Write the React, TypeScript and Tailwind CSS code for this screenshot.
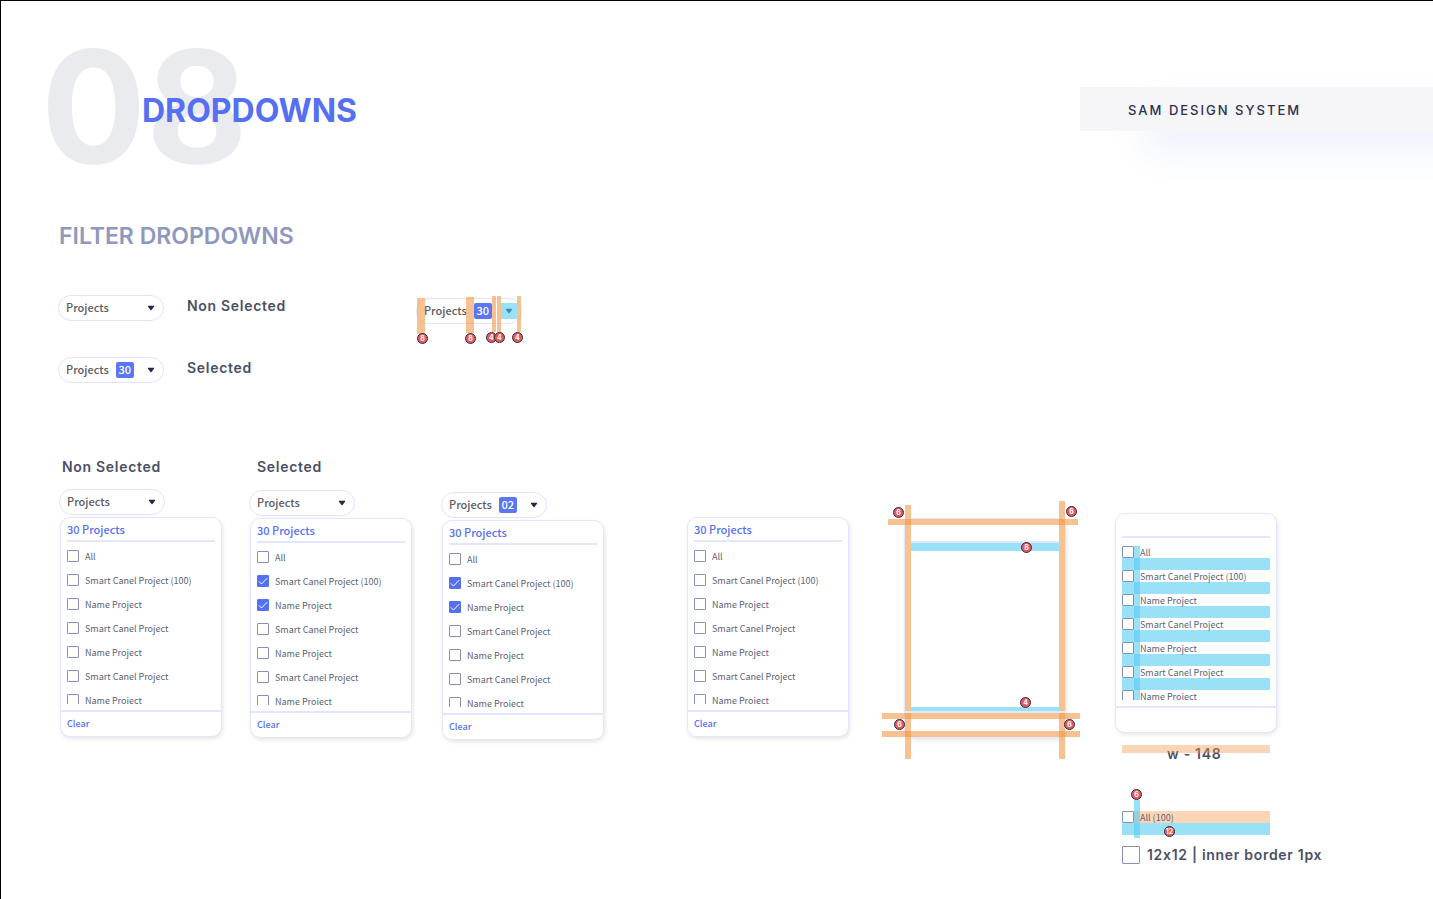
import type { ReactNode } from 'react';

const heading = "font-[Inter,'Open_Sans',sans-serif]";
const body = "font-['Noto_Sans_CJK_SC','Noto_Sans',sans-serif]";

const PROJECTS = [
  'All',
  'Smart Canel Project (100)',
  'Name Project',
  'Smart Canel Project',
  'Name Project',
  'Smart Canel Project',
  'Name Project',
];

function Caret() {
  return (
    <span className="ml-auto flex size-4 items-center justify-center">
      <svg width="8" height="6" viewBox="0 0 8 6" aria-hidden="true">
        <path
          d="M1.4 .8h5.2c.5 0 .7.5.4.9L4.5 4.9c-.3.4-.7.4-1 0L1 1.7C.7 1.300.9.8 1.4.8Z"
          fill="#232946"
        />
      </svg>
    </span>
  );
}

function FilterButton({ count }: { count?: string }) {
  return (
    <button
      type="button"
      aria-haspopup="listbox"
      className={`${body} flex h-[26px] w-[106px] items-center gap-[7px] rounded-full border border-[#dfe3fd] bg-white pr-1 pl-[7px] text-[11px] leading-4 font-medium text-[#5b5b5f]`}
    >
      <span className="pb-0.5">Projects</span>
      {count && (
        <span className="flex h-4 w-[18px] shrink-0 items-center justify-center rounded-[2px] bg-[#5b76f7] pb-0.5 text-white">
          {count}
        </span>
      )}
      <Caret />
    </button>
  );
}

function Checkbox({ id, checked = false }: { id: string; checked?: boolean }) {
  return (
    <span className="grid size-3 shrink-0">
      <input
        id={id}
        type="checkbox"
        defaultChecked={checked}
        className="peer col-start-1 row-start-1 size-3 appearance-none rounded-[1px] border border-[#8590bd] bg-white checked:border-[#5570f1] checked:bg-[#5570f1]"
      />
      <svg
        viewBox="0 0 12 12"
        aria-hidden="true"
        className="pointer-events-none col-start-1 row-start-1 size-3 opacity-0 peer-checked:opacity-100"
      >
        <path d="M1.800 6.300 4.500 9 10.300 3" fill="none" stroke="#fff" strokeWidth="1" />
      </svg>
    </span>
  );
}

type PanelProps = {
  id: string;
  title?: string;
  selected?: number[];
  items?: string[];
  action?: string;
  children?: ReactNode;
};

function Panel({ id, title, selected = [], items = PROJECTS, action, children }: PanelProps) {
  return (
    <div
      className={`${body} relative w-[162px] rounded-[10px] border border-[#e2e7ff] bg-white shadow-[1px_2px_4px_rgba(0,0,0,0.1)]`}
    >
      <div className="px-1.5">
        <div className="h-6 border-b-2 border-[#e2e7ff] pt-[3px] text-[11px] leading-4 font-medium text-[#5570f1]">
          {title}
        </div>
        <ul className="flex h-[162px] flex-col gap-3 overflow-hidden pt-2">
          {items.map((name, i) => (
            <li key={i} className="flex h-3 shrink-0 items-center gap-1.5">
              <Checkbox id={`${id}-${i}`} checked={selected.includes(i)} />
              <label htmlFor={`${id}-${i}`} className="pt-0.5 text-[9px] leading-3 text-[#5c5f76]">
                {name}
              </label>
            </li>
          ))}
        </ul>
      </div>
      <div className="mt-1.5 h-[26px] border-t-2 border-[#e2e7ff] px-1.5 pt-1.5">
        {action && (
          <button type="button" className="block text-[9px] leading-3 font-medium text-[#5570f1]">
            {action}
          </button>
        )}
      </div>
      {children}
    </div>
  );
}

function Guide({ className }: { className: string }) {
  return <span aria-hidden="true" className={`pointer-events-none absolute ${className}`} />;
}

function Marker({ className, children }: { className: string; children: ReactNode }) {
  return (
    <span
      className={`${heading} pointer-events-none absolute flex size-[11px] items-center justify-center rounded-full border border-[#2b3050] bg-[#eb5757] text-[7px] leading-none font-bold text-white ${className}`}
    >
      {children}
    </span>
  );
}

function Label({ children }: { children: ReactNode }) {
  return (
    <h3 className={`${heading} text-[14px] leading-5 font-semibold tracking-wider text-[#4b4f66]`}>
      {children}
    </h3>
  );
}

export default function App() {
  return (
    <main className="min-h-screen overflow-hidden border-t border-l border-black bg-white pb-8">
      <header className="flex items-start justify-between">
        <div className={`${heading} grid pt-[46px] pl-[40px]`}>
          <span className="col-start-1 row-start-1 text-[156px] leading-[120px] font-bold text-[#eaebef]">
            08
          </span>
          <h1 className="z-10 col-start-1 row-start-1 mt-[44px] ml-[101px] text-[32px] leading-10 font-bold text-[#5570f1]">
            DROPDOWNS
          </h1>
        </div>
        <p
          className={`${heading} mt-[86px] w-[353px] bg-[#f6f6f9] pt-[13px] pb-[11px] pl-12 text-[13px] leading-5 font-medium tracking-[2px] text-[#2b3050] shadow-[64px_20px_36px_rgba(72,112,245,0.09)]`}
        >
          SAM DESIGN SYSTEM
        </p>
      </header>

      <section className="pt-[53px] pl-[57px]">
        <h2 className={`${heading} pl-px text-[23px] leading-8 font-semibold text-[#8e97bd]`}>
          FILTER DROPDOWNS
        </h2>

        <div className="mt-[43px] flex items-start gap-[130px]">
          <div className="flex flex-col gap-9">
            <div className="flex h-[26px] items-start gap-[23px]">
              <FilterButton />
              <div className="pt-px">
                <Label>Non Selected</Label>
              </div>
            </div>
            <div className="flex h-[26px] items-start gap-[23px]">
              <FilterButton count="30" />
              <div className="pt-px">
                <Label>Selected</Label>
              </div>
            </div>
          </div>

          <div className="relative mt-[3px]">
            <FilterButton count="30" />
            <Guide className="top-0 left-px h-9 w-2 bg-[#f2994a]/60" />
            <Guide className="-top-px left-[50px] h-9 w-2 bg-[#f2994a]/60" />
            <Guide className="-top-0.5 left-[76px] h-9 w-1 bg-[#f2994a]/60" />
            <Guide className="-top-0.5 left-[81px] h-9 w-1 bg-[#f2994a]/60" />
            <Guide className="top-[5px] left-[85px] size-4 bg-[#56ccf2]/60" />
            <Guide className="-top-0.5 left-[101px] h-9 w-1 bg-[#f2994a]/60" />
            <Marker className="top-[35px] left-px">8</Marker>
            <Marker className="top-[35px] left-[49px]">8</Marker>
            <Marker className="top-[34px] left-[70px]">4</Marker>
            <Marker className="top-[34px] left-[78px]">4</Marker>
            <Marker className="top-[34px] left-[96px]">4</Marker>
          </div>
        </div>
      </section>

      <section className="grid grid-cols-[190px_192px_245px_217px_211px_1fr] items-start pt-[74px] pl-[59px]">
        <div>
          <div className="pb-3 pl-0.5">
            <Label>Non Selected</Label>
          </div>
          <div className="-ml-px pb-0.5">
            <FilterButton />
          </div>
          <Panel id="plain" title="30 Projects" action="Clear" />
        </div>

        <div>
          <div className="pb-[13px] pl-[7px]">
            <Label>Selected</Label>
          </div>
          <div className="-ml-px pb-0.5">
            <FilterButton />
          </div>
          <Panel id="picked" title="30 Projects" selected={[1, 2]} action="Clear" />
        </div>

        <div className="pt-[35px]">
          <div className="-ml-px pb-0.5">
            <FilterButton count="02" />
          </div>
          <Panel id="counted" title="30 Projects" selected={[1, 2]} action="Clear" />
        </div>

        <div className="pt-[60px]">
          <Panel id="base" title="30 Projects" action="Clear" />
        </div>

        <div className="relative mt-[61px]">
          <Panel id="frame" items={[]} />
          <Guide className="-top-[13px] left-px h-[206px] w-1.5 bg-[#f2994a]/60" />
          <Guide className="top-[195px] left-px h-[46px] w-1.5 bg-[#f2994a]/60" />
          <Guide className="-top-[17px] left-[155px] h-[210px] w-1.5 bg-[#f2994a]/60" />
          <Guide className="top-[195px] left-[155px] h-[46px] w-1.5 bg-[#f2994a]/60" />
          <Guide className="top-px -left-4 h-1.5 w-[190px] bg-[#f2994a]/60" />
          <Guide className="top-[195px] -left-[22px] h-1.5 w-[198px] bg-[#f2994a]/60" />
          <Guide className="top-[213px] -left-[22px] h-1.5 w-[198px] bg-[#f2994a]/60" />
          <Guide className="top-[25px] left-[7px] h-2 w-[148px] bg-[#56ccf2]/60" />
          <Guide className="top-[189px] left-[7px] h-1 w-[148px] bg-[#56ccf2]/60" />
          <Marker className="-top-[11px] -left-[11px]">6</Marker>
          <Marker className="-top-[12px] left-[162px]">6</Marker>
          <Marker className="top-6 left-[117px]">8</Marker>
          <Marker className="top-[179px] left-[116px]">4</Marker>
          <Marker className="top-[201px] -left-[10px]">6</Marker>
          <Marker className="top-[201px] left-[160px]">6</Marker>
        </div>

        <div className="pt-14">
          <Panel id="spacing">
            {[
              'top-[44px]',
              'top-[68px]',
              'top-[92px]',
              'top-[116px]',
              'top-[140px]',
              'top-[164px]',
            ].map((top) => (
              <Guide key={top} className={`${top} left-1.5 h-3 w-[148px] bg-[#56ccf2]/60`} />
            ))}
            <Guide className="top-8 left-[18px] h-[154px] w-1.5 bg-[#56ccf2]/60" />
          </Panel>

          <div className="relative mt-[11px] ml-[7px] w-[148px] pl-[45px]">
            <Guide className="top-px left-0 h-2 w-[148px] bg-[#f2994a]/40" />
            <Label>w - 148</Label>
          </div>

          <div className={`${body} relative mt-[47px] ml-[7px] flex w-[148px] flex-col`}>
            <div className="flex h-3 items-center">
              <Checkbox id="sample" />
              <label
                htmlFor="sample"
                className="h-3 flex-1 bg-[#f2994a]/40 pl-1.5 text-[9px] leading-[14px] text-[#5c5f76]"
              >
                All (100)
              </label>
            </div>
            <Guide className="top-3 left-0 h-3 w-[148px] bg-[#56ccf2]/60" />
            <Guide className="-top-[11px] left-3 h-[38px] w-1.5 bg-[#56ccf2]/60" />
            <Marker className="-top-[22px] left-[9px]">6</Marker>
            <Marker className="top-[15px] left-[42px]">12</Marker>
          </div>

          <div className="mt-[22px] ml-[7px] flex items-center gap-[7px]">
            <span className="size-[18px] rounded-[1px] border border-[#8590bd]" />
            <Label>12x12 | inner border 1px</Label>
          </div>
        </div>
      </section>
    </main>
  );
}
